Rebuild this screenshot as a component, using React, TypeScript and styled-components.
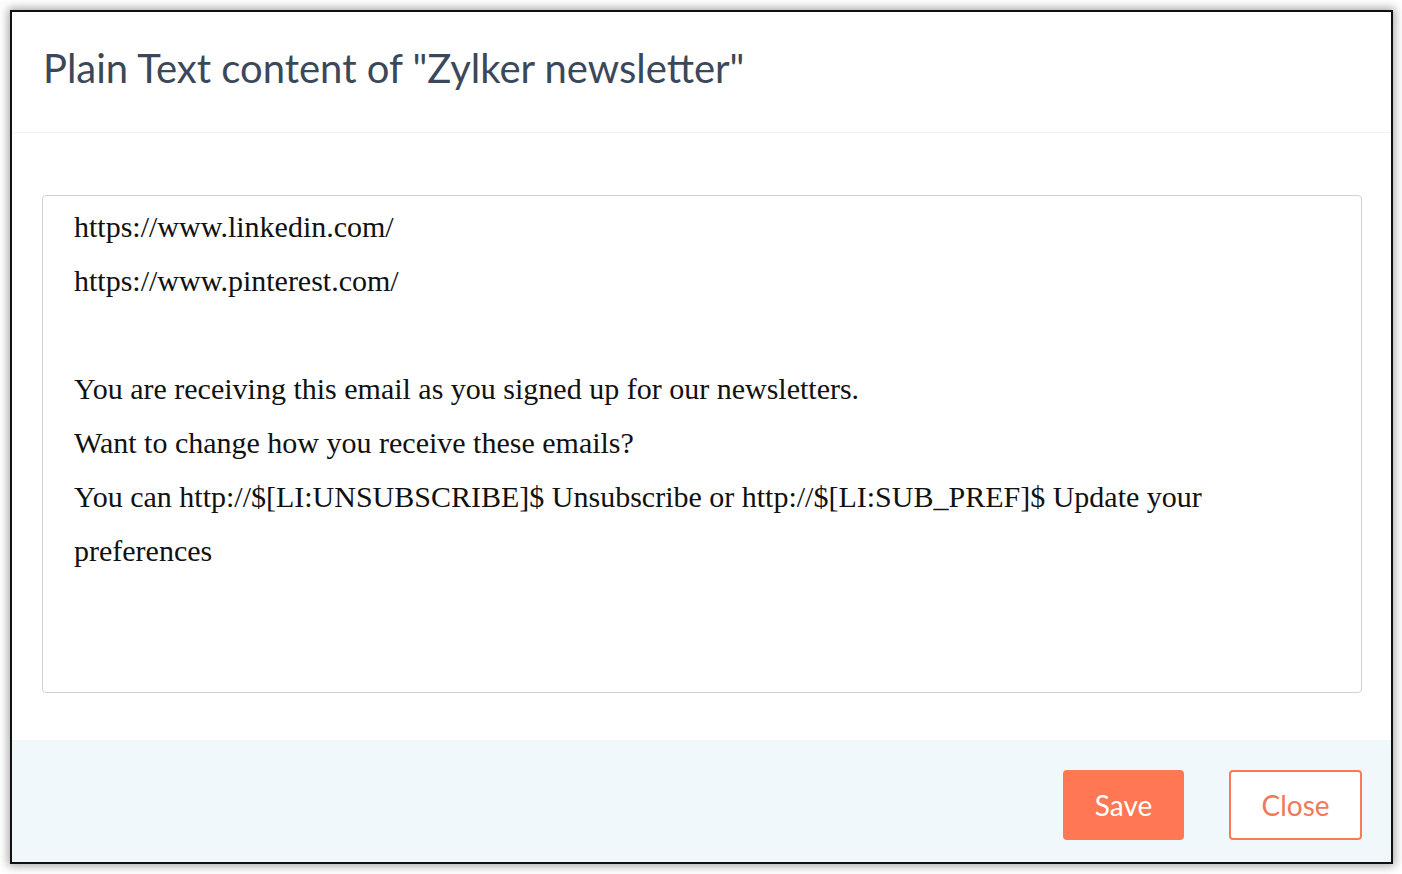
import React from "react";
import styled, { createGlobalStyle } from "styled-components";

const Global = createGlobalStyle`
  html, body { margin: 0; padding: 0; background: #ffffff; }
  body { font-family: Lato, "Open Sans", sans-serif; }
  * { box-sizing: border-box; }
`;

const Page = styled.div`
  width: 1402px;
  height: 874px;
  padding: 10px 9px 10px 10px;
  background: #ffffff;
`;

const Dialog = styled.div`
  width: 1383px;
  height: 854px;
  border: 2px solid #111111;
  background: #ffffff;
  box-shadow: 0 0 9px 2px rgba(0, 0, 0, 0.35);
  display: flex;
  flex-direction: column;
`;

const Header = styled.div`
  height: 121px;
  flex: none;
  border-bottom: 1px solid #edf2f6;
  display: flex;
  align-items: center;
  padding: 0 0 8px 31px;
`;

const Title = styled.h1`
  margin: 0;
  font-family: Lato, sans-serif;
  font-weight: 400;
  font-size: 40px;
  color: #3b4859;
`;

const Body = styled.div`
  flex: 1;
  padding: 62px 29px 47px 30px;
  display: flex;
`;

const TextBox = styled.div`
  flex: 1;
  border: 1px solid #d2d2d2;
  border-radius: 4px;
  padding: 4px 30px 0 31px;
  font-family: "Liberation Serif", "Times New Roman", serif;
  font-size: 30px;
  line-height: 54px;
  color: #111111;
  overflow: hidden;
`;

const Line = styled.div`
  min-height: 54px;
  white-space: nowrap;
`;

const Footer = styled.div`
  height: 122px;
  flex: none;
  background: #f1f8fc;
  display: flex;
  justify-content: flex-end;
  align-items: flex-start;
  gap: 45px;
  padding: 30px 29px 0 0;
`;

const Button = styled.button<{ $primary?: boolean }>`
  height: 70px;
  width: ${(p) => (p.$primary ? "121px" : "133px")};
  padding: 0;
  border-radius: 4px;
  font-family: Lato, sans-serif;
  font-size: 28px;
  font-weight: 400;
  cursor: pointer;
  border: 2px solid #fa7a58;
  background: ${(p) => (p.$primary ? "#ff7753" : "#ffffff")};
  color: ${(p) => (p.$primary ? "#ffffff" : "#f2785a")};
`;

const lines = [
  "https://www.linkedin.com/",
  "https://www.pinterest.com/",
  "",
  "You are receiving this email as you signed up for our newsletters.",
  "Want to change how you receive these emails?",
  "You can http://$[LI:UNSUBSCRIBE]$ Unsubscribe or http://$[LI:SUB_PREF]$ Update your",
  "preferences",
];

export default function App() {
  return (
    <>
      <Global />
      <Page>
        <Dialog>
          <Header>
            <Title>Plain Text content of "Zylker newsletter"</Title>
          </Header>
          <Body>
            <TextBox>
              {lines.map((l, i) => (
                <Line key={i}>{l}</Line>
              ))}
            </TextBox>
          </Body>
          <Footer>
            <Button $primary>Save</Button>
            <Button>Close</Button>
          </Footer>
        </Dialog>
      </Page>
    </>
  );
}
